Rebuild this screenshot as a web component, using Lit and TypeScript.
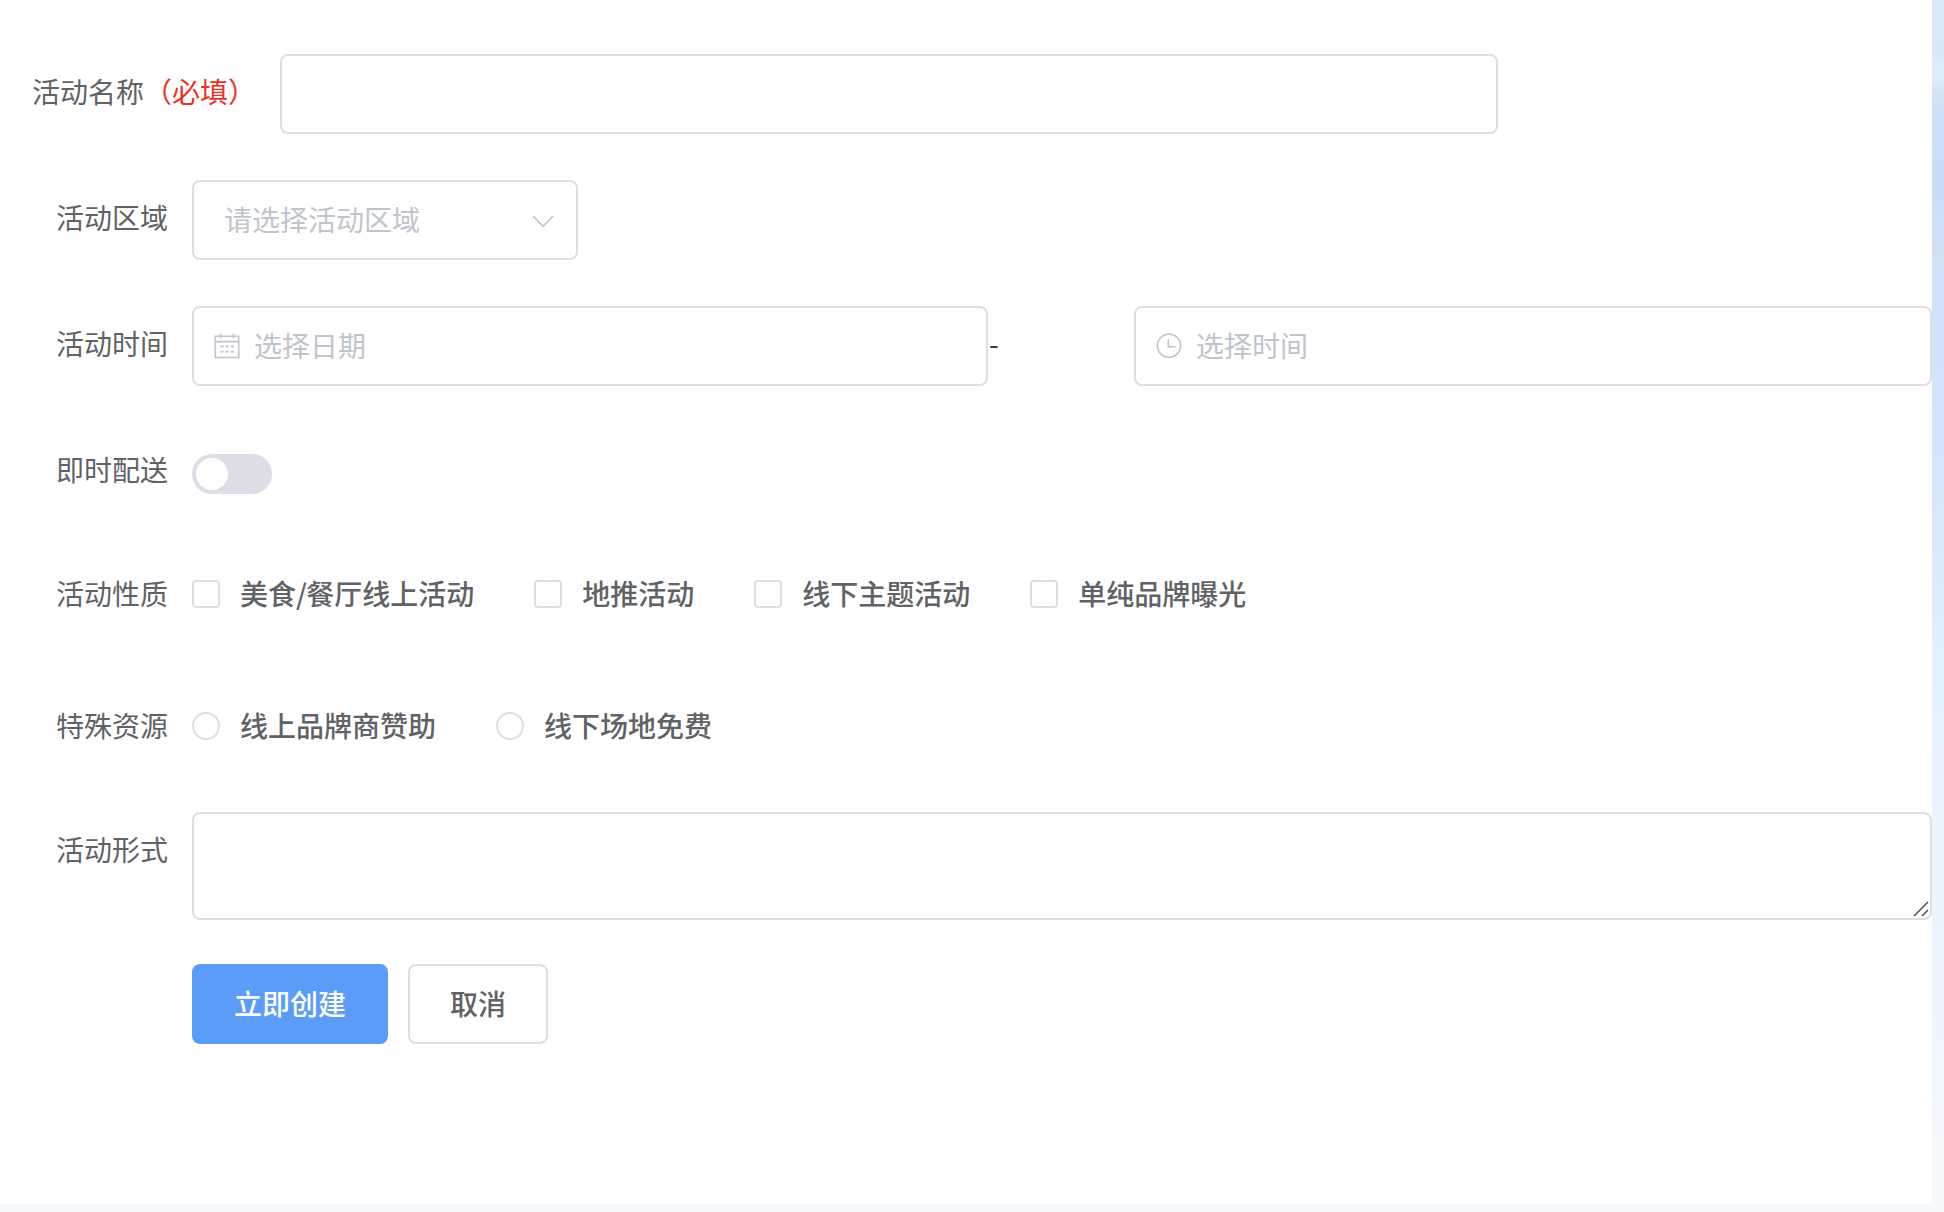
import { LitElement, html, css, svg } from "lit";
import { customElement, property } from "lit/decorators.js";

const calendar = svg`<path d="M1.3 3.2H24.7V24.5H1.3ZM1.3 8.6H24.7M6.7 0.8V5.6M19.3 0.8V5.6M6.4 13.4H9.6M11.5 13.4H14.7M16.8 13.4H20M6.4 18.6H9.6M11.5 18.6H14.7M16.8 18.6H20"/>`;
const clock = svg`<circle cx="13" cy="12.7" r="11.6"/><path d="M12.3 6.2V13.7H19.8"/>`;

@customElement("form-row")
class FormRow extends LitElement {
  @property() label = "";
  @property() note = "";
  static styles = css`
    :host { display: flex; }
    .label { box-sizing: border-box; min-width: 192px; height: 76px; padding-right: 24px; line-height: 74px; text-align: right; white-space: nowrap; color: #606266; }
    .note { color: #ee2f1f; }
    .label.wide { padding-left: 32px; }
    .content { display: flex; flex: 1; min-width: 0; }
  `;
  render() {
    return html`<div class="label ${this.note ? "wide" : ""}">${this.label}${this.note ? html`<span class="note">${this.note}</span>` : ""}</div>
      <div class="content"><slot></slot></div>`;
  }
}

@customElement("app-root")
class AppRoot extends LitElement {
  static styles = css`
    :host {
      display: block; box-sizing: border-box; width: 1944px; height: 1212px; padding: 0 12px 8px 0; overflow: hidden;
      font: 400 28px "Noto Sans CJK SC", sans-serif; color: #606266;
      background: linear-gradient(180deg, #dbeafa 0, #d8e7f7 55px, #dfedfb 66px, #deecfa 78px, #d5e5f6 92px, #cee1f6 104px, #cadff7 125px, #c8def8 190px, #d1e2f5 250px, #cfe2f9 300px, #d2e5fb 400px, #d3e6fc 460px, #deecfc 600px, #e1f0fd 650px, #e9f3ff 780px, #e9f4fe 860px, #edf6ff 1000px, #f0f6fe 1100px, #f4f8fd 1130px, #f4f8fd 1212px);
    }
    .panel { box-sizing: border-box; height: 1204px; padding-top: 54px; background: #fff; }
    .row { height: 80px; margin-bottom: 46px; }
    .row.switch-row { margin-bottom: 44px; }
    .row.choices { height: 76px; margin-bottom: 56px; }
    .row.resources { height: 76px; margin-bottom: 48px; }
    .row.area-row { height: 108px; margin-bottom: 44px; }
    .field { box-sizing: border-box; display: flex; align-items: center; height: 80px; border: 2px solid #dddee5; border-radius: 8px; background: #fff; color: #c0c4cc; }
    .placeholder { padding-bottom: 2px; }
    .name { width: 1218px; }
    .region { width: 386px; padding: 0 21px 0 30px; justify-content: space-between; }
    .date { width: 796px; padding-left: 20px; gap: 14px; }
    .time { width: 798px; padding-left: 20px; gap: 14px; }
    .dash { box-sizing: border-box; width: 146px; padding-left: 1px; line-height: 75px; color: #2c3e50; }
    .icon { flex: none; width: 26px; height: 26px; fill: none; stroke: #c0c4cc; stroke-width: 1.6; }
    .chevron { flex: none; width: 24px; height: 24px; fill: none; stroke: #c0c4cc; stroke-width: 1.7; }
    .switch { box-sizing: border-box; width: 80px; height: 40px; margin-top: 22px; padding: 4px; border-radius: 20px; background: #dddee5; }
    .knob { width: 32px; height: 32px; border-radius: 50%; background: #fff; }
    .option { display: flex; align-items: center; height: 76px; margin-right: 60px; gap: 20px; font-weight: 500; white-space: nowrap; }
    .text { padding-bottom: 2px; }
    .mark { box-sizing: border-box; width: 28px; height: 28px; border: 2px solid #dddee5; border-radius: 4px; }
    .mark.radio { border-radius: 50%; }
    .slash { letter-spacing: -0.8px; }
    .area { box-sizing: border-box; position: relative; width: 1740px; height: 108px; border: 2px solid #dddee5; border-radius: 8px; }
    .grip { position: absolute; right: 1px; bottom: 1px; width: 16px; height: 16px; fill: none; stroke: #555; stroke-width: 1.6; }
    .actions { display: flex; gap: 20px; padding-left: 192px; }
    .button { box-sizing: border-box; height: 80px; padding: 0 40px 2px; border: 2px solid #dddee5; border-radius: 8px; background: #fff; color: #606266; font: inherit; font-weight: 500; line-height: 74px; }
    .button.primary { border-color: #5a9cf8; background: #5a9cf8; color: #fff; }
  `;
  private option(text: unknown, kind = "") {
    return html`<label class="option"><span class="mark ${kind}"></span><span class="text">${text}</span></label>`;
  }
  render() {
    return html`<main class="panel">
      <form-row class="row" label="活动名称" note="（必填）"><div class="field name"></div></form-row>
      <form-row class="row" label="活动区域">
        <div class="field region"><span class="placeholder">请选择活动区域</span><svg class="chevron" viewBox="0 0 24 24"><path d="M2 8L12 18.3L22 8"/></svg></div>
      </form-row>
      <form-row class="row" label="活动时间">
        <div class="field date"><svg class="icon" viewBox="0 0 26 26">${calendar}</svg><span class="placeholder">选择日期</span></div>
        <div class="dash">-</div>
        <div class="field time"><svg class="icon" viewBox="0 0 26 26">${clock}</svg><span class="placeholder">选择时间</span></div>
      </form-row>
      <form-row class="row switch-row" label="即时配送"><div class="switch"><div class="knob"></div></div></form-row>
      <form-row class="row choices" label="活动性质">
        ${this.option(html`美食<span class="slash">/</span>餐厅线上活动`)}
        ${["地推活动", "线下主题活动", "单纯品牌曝光"].map((t) => this.option(t))}
      </form-row>
      <form-row class="row resources" label="特殊资源">
        ${["线上品牌商赞助", "线下场地免费"].map((t) => this.option(t, "radio"))}
      </form-row>
      <form-row class="row area-row" label="活动形式">
        <div class="area"><svg class="grip" viewBox="0 0 16 16"><path d="M1 15L15 1M9 15L15 9"/></svg></div>
      </form-row>
      <div class="actions"><button class="button primary">立即创建</button><button class="button">取消</button></div>
    </main>`;
  }
}
